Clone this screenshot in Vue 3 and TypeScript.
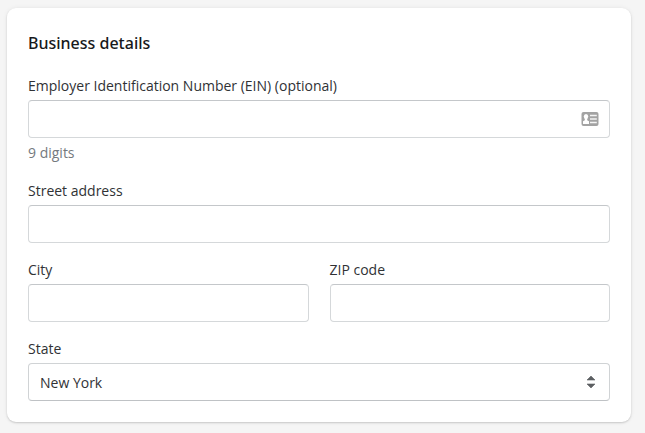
<script setup lang="ts">
import { reactive } from 'vue'

interface BusinessDetails {
  ein: string
  street: string
  city: string
  zip: string
  state: string
}

const form = reactive<BusinessDetails>({
  ein: '',
  street: '',
  city: '',
  zip: '',
  state: 'New York',
})
</script>

<template>
  <main class="page">
    <form class="card" @submit.prevent>
      <h2 class="title">Business details</h2>

      <div class="fields">
        <div class="field">
          <label for="ein">Employer Identification Number (EIN) (optional)</label>
          <div class="control">
            <input id="ein" v-model="form.ein" type="text" aria-describedby="ein-help" />
            <svg class="icon card-icon" width="18" height="16" viewBox="0 0 18 16" aria-hidden="true">
              <rect x="0.5" y="1" width="17" height="14" rx="2" fill="#a3a3a3" />
              <ellipse cx="5" cy="5.6" rx="2.2" ry="2.6" fill="#fff" />
              <path d="M3.8 7h2.4v2.2l1.8 1V13H2v-2.8l1.8-1z" fill="#fff" />
              <path d="M9 4.500h6.800M9 8h6.800M9 11.500h6.800" stroke="#f4f4f4" stroke-width="1.5" />
            </svg>
          </div>
          <p id="ein-help" class="help">9 digits</p>
        </div>

        <div class="field">
          <label for="street">Street address</label>
          <input id="street" v-model="form.street" type="text" />
        </div>

        <div class="row">
          <div class="field">
            <label for="city">City</label>
            <input id="city" v-model="form.city" type="text" />
          </div>
          <div class="field">
            <label for="zip">ZIP code</label>
            <input id="zip" v-model="form.zip" type="text" />
          </div>
        </div>

        <div class="field">
          <label for="state">State</label>
          <div class="control">
            <select id="state" v-model="form.state">
              <option>New York</option>
            </select>
            <svg class="icon arrows" width="10" height="14" viewBox="0 0 10 14" aria-hidden="true">
              <path d="M1 5 5 1l4 4zM1 9h8l-4 4z" fill="#5c5f62" stroke="#5c5f62" stroke-width=".6" stroke-linejoin="round" />
            </svg>
          </div>
        </div>
      </div>
    </form>
  </main>
</template>

<style>
body {
  background: #f5f5f5;
}
</style>

<style scoped>
.page {
  padding: 8px 14px 11px 7px;
  font-family: "Segoe UI", "Open Sans", "Noto Sans", sans-serif;
  font-size: 14px;
  color: #303235;
}

.card {
  padding: 21px;
  background: #fff;
  border-radius: 9px;
  box-shadow: 0 0 5px rgba(23, 24, 24, 0.06), 0 1px 2px rgba(0, 0, 0, 0.16);
}

.title {
  margin: 0 0 19px;
  font-family: "Segoe UI", "Noto Sans", sans-serif;
  font-size: 16px;
  line-height: 28px;
  font-weight: 500;
  color: #17191b;
}

.fields {
  display: flex;
  flex-direction: column;
  gap: 17px;
}

.row {
  display: grid;
  grid-template-columns: 1fr 1fr;
  gap: 21px;
}

.field {
  display: flex;
  flex-direction: column;
  gap: 4px;
  min-width: 0;
}

label {
  line-height: 20px;
}

.control {
  display: grid;
  align-items: center;
}

.control > * {
  grid-area: 1 / 1;
}

input,
select {
  box-sizing: border-box;
  width: 100%;
  height: 38px;
  margin: 0;
  padding: 0 11px;
  border: 1px solid #d5d8da;
  border-top-color: #c4c7ca;
  border-radius: 4px;
  background: #fff;
  font: inherit;
  color: inherit;
  appearance: none;
}

select {
  border-color: #d0d3d5;
  border-bottom-color: #bfc2c5;
}

.icon {
  justify-self: end;
  pointer-events: none;
}

.card-icon {
  margin-right: 11px;
}

.arrows {
  margin-right: 14px;
}

.help {
  margin: 0;
  line-height: 22px;
  color: #74797e;
}
</style>
